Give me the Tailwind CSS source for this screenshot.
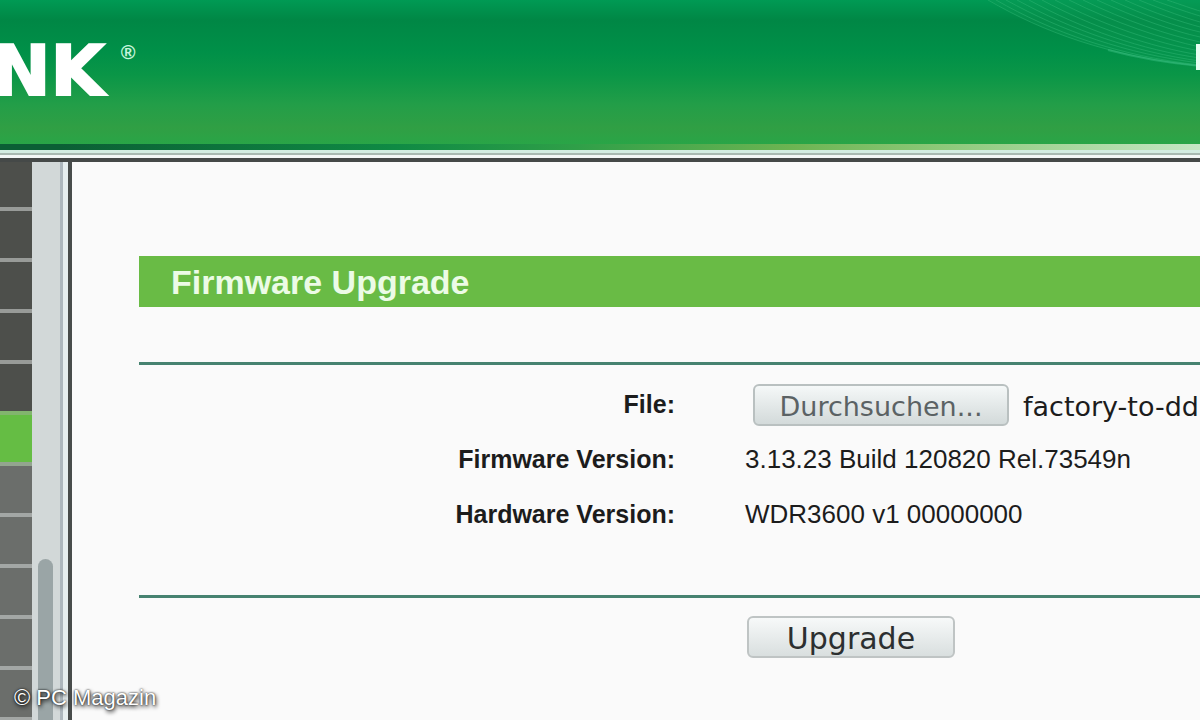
<!DOCTYPE html>
<html lang="de">
<head>
    <meta charset="UTF-8">
    <meta name="viewport" content="width=device-width, initial-scale=1.0">
    <title>Firmware Upgrade</title>
    <script src="https://cdn.jsdelivr.net/npm/@tailwindcss/browser@4"></script>
</head>

<body class="bg-[#fafafa] font-['Liberation_Sans',Arial,sans-serif] text-[#1c1c1c]">
  <div class="relative flex h-screen flex-col overflow-hidden">

    <!-- Header -->
    <header class="relative shrink-0">
      <div class="flex h-36 items-start bg-[linear-gradient(to_bottom,#009a54_0px,#008745_20px,#009048_52px,#0a9647_75px,#239e48_105px,#309f44_128px,#29a547_144px)]">
        <!-- Logo -->
        <a href="#" class="-ml-2 mt-8 flex items-start text-white">
          <span class="font-['DejaVu_Sans',sans-serif] text-[70px] leading-[78px] font-bold [-webkit-text-stroke:2px_#fff]">NK</span>
          <span class="ml-4 mt-2 text-[20px] leading-6 font-bold text-[#c5f5dc]">®</span>
        </a>
      </div>
      <!-- Swoosh on the right -->
      <svg class="absolute top-0 right-0 h-[72px] w-[212px]" viewBox="0 0 212 72" fill="none" stroke="#2fb573" stroke-width="1">
        <path d="M0 0C55 32 120 56 212 67V0Z" fill="#12a05a" fill-opacity=".3" stroke="none"/>
        <g stroke-opacity=".5">
          <path d="M0 0C55 32 120 56 212 66"/>
          <path d="M8 0C64 32 130 56 212 65"/>
          <path d="M18 0C74 31 138 54 212 63"/>
          <path d="M29 0C84 30 146 52 212 61"/>
          <path d="M41 0C94 29 154 50 212 58"/>
          <path d="M54 0C104 27 162 47 212 55"/>
          <path d="M67 0C115 25 168 43 212 51"/>
          <path d="M81 0C127 23 175 39 212 47"/>
          <path d="M95 0C138 21 180 35 212 42"/>
          <path d="M109 0C148 18 185 31 212 37"/>
          <path d="M123 0C158 16 190 27 212 32"/>
          <path d="M137 0C168 14 194 22 212 27"/>
          <path d="M151 0C178 11 198 18 212 22"/>
          <path d="M165 0C187 8 202 13 212 16"/>
          <path d="M179 0C194 5 205 9 212 11"/>
        </g>
        <path d="M120 50C150 58 180 63 212 66" stroke="#3fc084" stroke-width="2" stroke-opacity=".45"/>
        <path d="M210 44V70" stroke="#e6fff2" stroke-width="4"/>
      </svg>
      <div class="h-1.5 bg-[linear-gradient(to_right,#0b5f35_5%,#0f8a44_33%,#2f9f48_48%,#6db452_66%,#8cc878_78%,#c5e6c4_100%)]"></div>
      <div class="h-[3px] bg-[#d3ede2]"></div>
      <div class="h-0.5 bg-[#a9bab2]"></div>
      <div class="h-[3px] bg-[#f4f8f7]"></div>
      <div class="h-1 bg-[#454948]"></div>
    </header>

    <div class="flex min-h-0 flex-1">
      <!-- Menu -->
      <nav class="w-8 shrink-0 overflow-hidden">
        <a href="#" aria-label="Menu 1" class="block h-[49px] border-b-4 border-[#989b98] bg-[#4d4f4b]"></a>
        <a href="#" aria-label="Menu 2" class="block h-[51px] border-b-4 border-[#989b98] bg-[#4d4f4b]"></a>
        <a href="#" aria-label="Menu 3" class="block h-[51px] border-b-4 border-[#989b98] bg-[#4d4f4b]"></a>
        <a href="#" aria-label="Menu 4" class="block h-[51px] border-b-4 border-[#989b98] bg-[#4d4f4b]"></a>
        <a href="#" aria-label="Menu 5" class="block h-[51px] border-b-4 border-[#82b56e] bg-[#4d4f4b]"></a>
        <a href="#" aria-label="Menu 6" class="block h-[51px] border-b-4 border-[#93a58f] bg-[#65bd44]"></a>
        <a href="#" aria-label="Menu 7" class="block h-[51px] border-b-4 border-[#a3a7a5] bg-[#6b6e6b]"></a>
        <a href="#" aria-label="Menu 8" class="block h-[51px] border-b-4 border-[#a3a7a5] bg-[#6b6e6b]"></a>
        <a href="#" aria-label="Menu 9" class="block h-[51px] border-b-4 border-[#a3a7a5] bg-[#6b6e6b]"></a>
        <a href="#" aria-label="Menu 10" class="block h-[51px] border-b-4 border-[#a3a7a5] bg-[#6b6e6b]"></a>
        <a href="#" aria-label="Menu 11" class="block h-[51px] border-b-4 border-[#a3a7a5] bg-[#6b6e6b]"></a>
      </nav>

      <!-- Scrollbar -->
      <div class="flex w-7 shrink-0 bg-[#d2d8d8] pt-[397px] pl-1.5">
        <div class="w-[15px] rounded-t-full bg-[#9aa5a6]"></div>
      </div>
      <div class="w-[3px] shrink-0 bg-[#adb7bd]"></div>
      <div class="w-[5px] shrink-0 bg-[#e6eeef]"></div>
      <div class="w-1 shrink-0 bg-[#484c4b]"></div>

      <!-- Content -->
      <main class="min-w-0 flex-1 overflow-hidden pt-[94px] pl-[67px]">
        <h1 class="h-[51px] bg-[#69bb45] pl-8 text-[34px] leading-[53px] font-bold text-[#ecfbe6]">Firmware Upgrade</h1>

        <form>
          <hr class="mt-[55px] border-t-[3px] border-[#468270]">

          <div class="mt-3 grid grid-cols-[536px_1fr] gap-x-[70px] text-[26px] leading-[55px] whitespace-nowrap">
            <label for="datei" class="text-right text-[25px] font-bold">File:</label>
            <div class="flex items-center pl-2 font-['DejaVu_Sans',sans-serif] text-[27px]">
              <button id="datei" type="button" class="h-[42px] w-64 shrink-0 rounded-md border-2 border-[#b9c0c0] bg-linear-to-b from-[#f5f8f8] to-[#d3dada] pt-1 leading-8 text-[#5b6264]">Durchsuchen...</button>
              <span class="ml-3.5 pt-1 leading-8">factory-to-dd</span>
            </div>

            <span class="text-right text-[25px] font-bold">Firmware Version:</span>
            <span>3.13.23 Build 120820 Rel.73549n</span>

            <span class="text-right text-[25px] font-bold">Hardware Version:</span>
            <span>WDR3600 v1 00000000</span>
          </div>

          <hr class="mt-[53px] border-t-[3px] border-[#468270]">
          <button type="submit" class="mt-[18px] ml-[608px] h-[42px] w-52 rounded-md border-2 border-[#bfc4c4] bg-linear-to-b from-[#f7f9f9] to-[#d9dfdf] pt-1 font-['DejaVu_Sans',sans-serif] text-[30px] leading-8 text-[#2c2f30]">Upgrade</button>
        </form>
      </main>
    </div>

    <!-- Copyright -->
    <p class="absolute bottom-2 left-3.5 text-[22px] leading-7 text-white [text-shadow:0_0_2px_#000,1px_2px_4px_#000]">© PC Magazin</p>
  </div>
</body>
</html>
